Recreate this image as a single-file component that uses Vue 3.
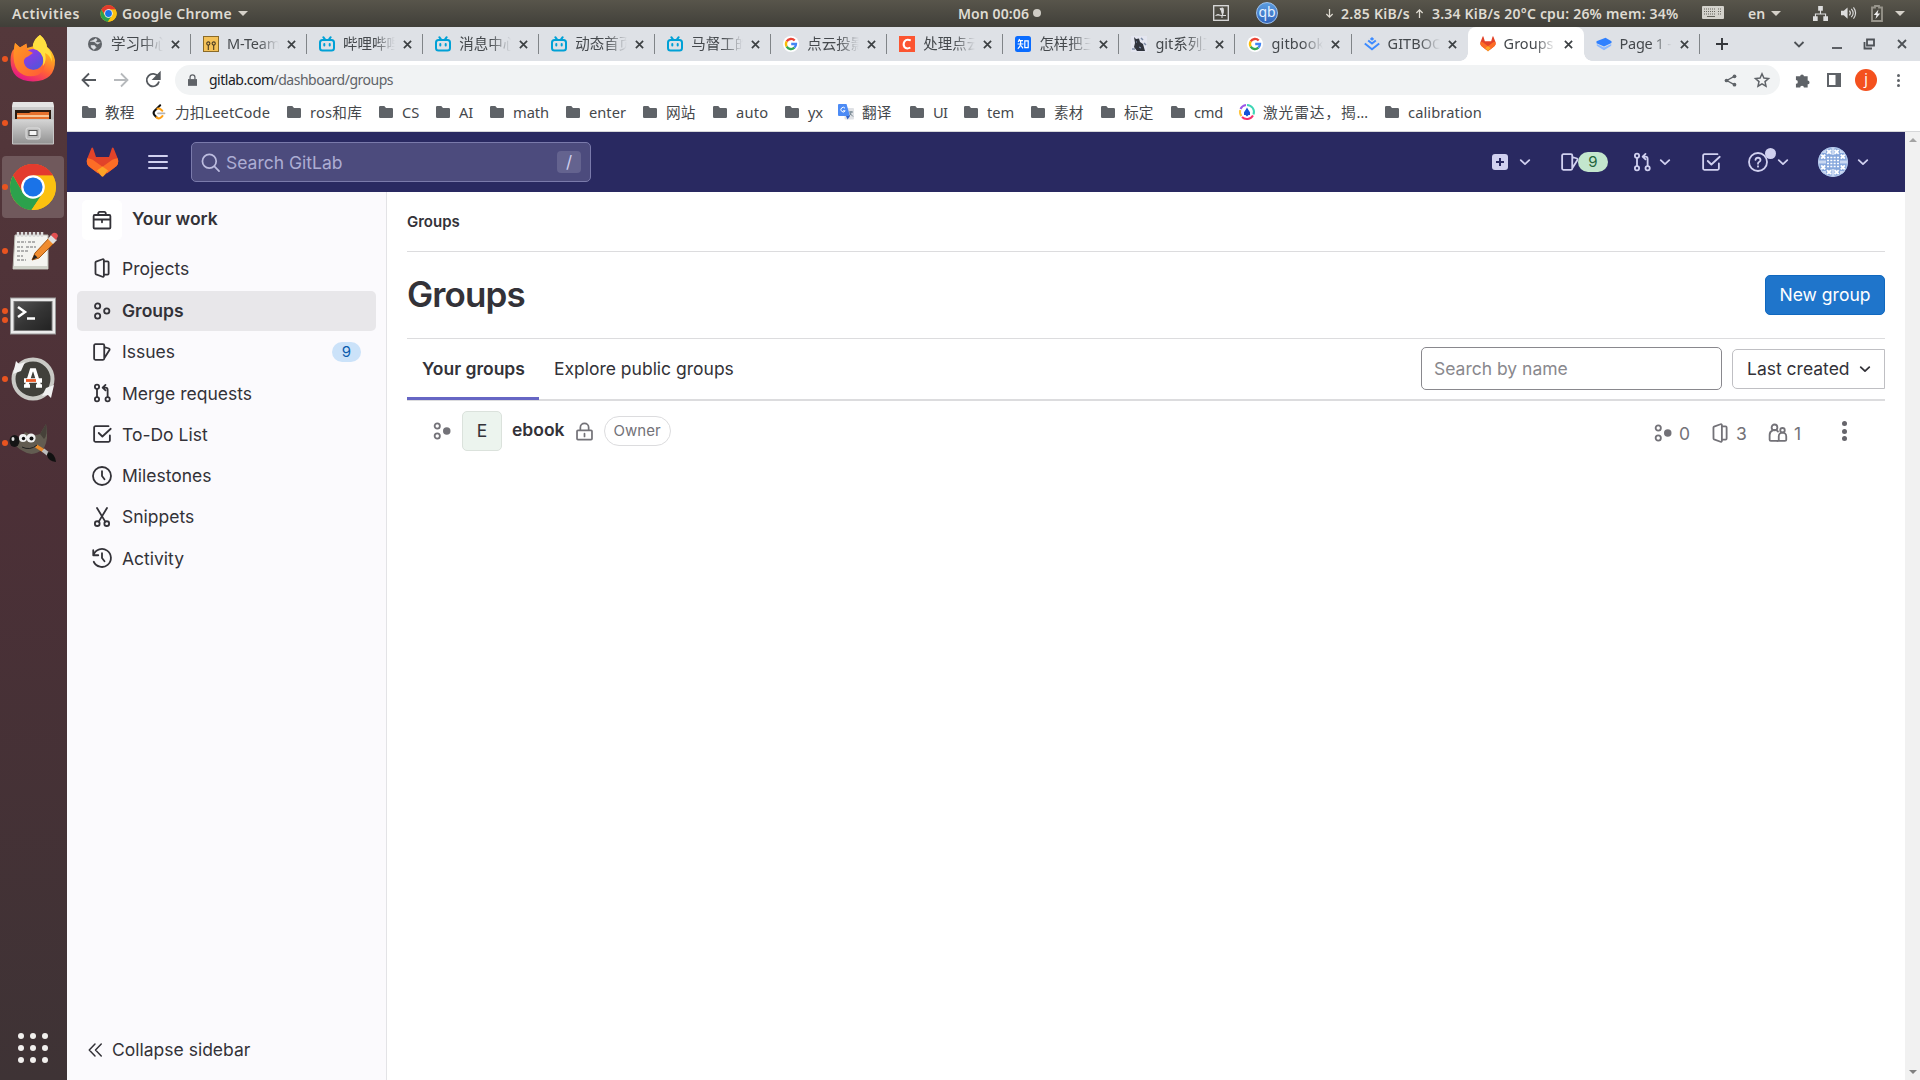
<script setup>
// Stretches a label to a set width by spreading the difference over its letters.
const vFit = {
  mounted(el, { value }) {
    if (!value) return
    const n = Array.from(el.textContent.trim()).length
    const w = el.getBoundingClientRect().width
    el.style.letterSpacing = ((value - w) / n).toFixed(3) + 'px'
  },
}

const chromeLogo =
  '<circle cx="24" cy="24" r="23" fill="#fbc110"/><path d="M24 24 4.1 12.5A23 23 0 0 1 43.9 12.5H24Z" fill="#e33b2e"/><path d="M4.1 12.5A23 23 0 0 0 22.5 47L34 29.8 24 24 14 29.8Z" fill="#2ca14c"/><path d="M4.1 12.5 14 29.8A11.5 11.5 0 0 1 24 12.5H43.9A23 23 0 0 0 4.1 12.5Z" fill="#e33b2e"/><path d="M34 29.8 22.5 47A23 23 0 0 0 43.9 12.5H24Z" fill="#fbc110"/><circle cx="24" cy="24" r="11.8" fill="#fff"/><circle cx="24" cy="24" r="9.6" fill="#1a73e8"/>'

const google =
  '<circle cx="8" cy="8" r="8" fill="#fff"/><g fill="none" stroke-width="2.3"><path d="M11.7 4.6A5 5 0 0 0 3.7 5.4" stroke="#ea4335"/><path d="M3.7 5.4A5 5 0 0 0 3.7 10.6" stroke="#fbbc05"/><path d="M3.7 10.6A5 5 0 0 0 11.4 11.7" stroke="#34a853"/><path d="M11.4 11.7A5 5 0 0 0 13 8H8.2" stroke="#4285f4"/></g>'
const bili =
  '<g fill="none" stroke="#00a1d6" stroke-width="2" stroke-linecap="round"><rect x="1" y="4" width="14" height="10.5" rx="2.5"/><path d="M4.3 1.2 6 3.4M11.7 1.2 10 3.4"/><path d="M5.3 8v1.6M10.7 8v1.6"/></g>'
const fox =
  '<path d="M5.3 1 1.3 11.5A8.8 8.8 0 0 0 4.5 21.5L16 30.5 27.5 21.5A8.8 8.8 0 0 0 30.7 11.5L26.7 1Q26 0 25.2 1L22.3 10.3H9.7L6.8 1Q6 0 5.3 1Z" fill="#e24329"/><path d="M1.3 11.5A8.8 8.8 0 0 0 4.5 21.5L11.5 27 16 20.5 6.5 13.2Q4 11.5 1.3 11.5ZM30.7 11.5A8.8 8.8 0 0 1 27.5 21.5L20.5 27 16 20.5 25.5 13.2Q28 11.5 30.7 11.5Z" fill="#fc6d26"/><path d="M10.6 24.2 16 20 21.4 24.2 17 30.2Q16 31 15 30.2Z" fill="#fca326"/>'

const tabIcons = {
  globe: '<circle cx="8" cy="8" r="7" fill="#5f6368"/><path d="M3 5.5 6 4.5 9 2.5 10 4 8 6.5 10.5 8 13.3 6.5M4 9.5h3.5L9 11.5 7 13.5 4.5 11.5Z" fill="#dee1e6" stroke="#dee1e6" stroke-width=".6"/>',
  mteam: '<rect x=".5" y=".5" width="15" height="15" fill="#f4c259" stroke="#8b6b28"/><g fill="none" stroke="#4a3b22" stroke-width="1.1"><circle cx="5.3" cy="7.5" r="1.6"/><circle cx="10.7" cy="7.5" r="1.6"/><path d="M5.3 9v5M10.7 9v5"/></g>',
  bili,
  google,
  csdn: '<rect width="16" height="16" fill="#fc5531"/><path d="M11.8 4.4Q7.5 2.6 5.6 5.3 3.7 8.4 5.4 11 7.4 13.4 11.4 11.7" fill="none" stroke="#fff" stroke-width="2"/>',
  zhihu: '<rect width="16" height="16" rx="2.5" fill="#0a6cff"/><g fill="none" stroke="#fff" stroke-width="1.2"><path d="M4.6 3 3.2 6M4 4.7h4M2.6 8h5.8M5.6 4.8V8Q5.3 11 2.8 12.7M6 9.5l2 2.8M9.8 4.8h3.4v6.8H9.8Z"/></g>',
  cat: '<rect width="16" height="16" fill="#e4e6f0"/><path d="M3 1 5 3 8 2.5 9 6 12 8 14 15H6L3 11 4 7Z" fill="#30343d"/><path d="M10 2 12 4M1 13h3M13 7l2 2" stroke="#8190aa" stroke-width="1.5"/><path d="M5 6h1M8 11l2 1" stroke="#8fa2c7"/>',
  juejin: '<path d="M8 1 10.2 2.9 8 4.7 5.8 2.9Z" fill="#3d8bff"/><path d="M4.2 4.5 8 7.5l3.8-3M.8 7.5 8 13.2 15.2 7.5" fill="none" stroke="#3d8bff" stroke-width="2"/>',
  fox: '<g transform="scale(.5)">' + fox + '</g>',
  layers: '<path d="M.8 9.800V8L8 11.500 15.200 8V9.800L8 14.200Z" fill="#8ab8ff"/><path d="M9.500 1.800 15.500 5.200V7L8 10.500.5 7.200V5.200Z" fill="#2f80ff"/>',
}

const tabs = [
  { t: '学习中心', i: 'globe' },
  { t: 'M-Team', i: 'mteam', w: 53 },
  { t: '哔哩哔哩', i: 'bili' },
  { t: '消息中心', i: 'bili' },
  { t: '动态首页', i: 'bili' },
  { t: '马督工的', i: 'bili' },
  { t: '点云投影', i: 'google' },
  { t: '处理点云', i: 'csdn' },
  { t: '怎样把三', i: 'zhihu' },
  { t: 'git系列工', i: 'cat' },
  { t: 'gitbook', i: 'google', w: 53 },
  { t: 'GITBOO', i: 'juejin', last: true, w: 56 },
  { t: 'Groups', i: 'fox', active: true, w: 50 },
  { t: 'Page 1 -', i: 'layers', w: 52 },
]

const folder = '<path d="M1 3.2A1.2 1.2 0 0 1 2.2 2H6.3L8 4h5.8A1.2 1.2 0 0 1 15 5.2v7.6A1.2 1.2 0 0 1 13.8 14H2.2A1.2 1.2 0 0 1 1 12.8Z" fill="#5f6368"/>'
const leet = '<path d="M5.500 13.200 3.400 11Q1.700 9 3.400 7L9.200 1.200" fill="none" stroke="#111" stroke-width="2" stroke-linecap="round"/><path d="M5.500 13.200Q8 15.500 10 13.400L11.5 12M6.500 4.800Q8.500 4 11.300 6.800" fill="none" stroke="#ffa116" stroke-width="2" stroke-linecap="round"/><path d="M7 9.300h6.500" stroke="#b3b3b3" stroke-width="1.8" stroke-linecap="round"/>'
const translate = '<rect x="6.5" y="4" width="9.5" height="11.5" rx="1" fill="#dfe1e5"/><path d="M1 0H8.5L12 12H1A1 1 0 0 1 0 11V1A1 1 0 0 1 1 0Z" fill="#4c8bf5"/><path d="M8 12h4l-2.5 3.5Z" fill="#2f62c9"/><path d="M7 4.2A2.3 2.3 0 1 0 7.2 6.8H5" fill="none" stroke="#fff"/><path d="M11 8h4M13 7v1Q13 11 11 12M12 9.5l3 3" stroke="#71828d" fill="none"/>'
const radar = '<g fill="none" stroke-width="2"><path d="M8 1A7 7 0 0 1 14.5 10.5" stroke="#3fd6b5"/><path d="M14 11.5A7 7 0 0 1 3 13" stroke="#f5306a"/><path d="M2.5 12.2A7 7 0 0 1 1.2 6" stroke="#ffc53d"/><path d="M1.5 5A7 7 0 0 1 7 1" stroke="#9c56e8"/></g><path d="M8 3.5Q9 5.5 11 8.2V11H9.5L8 12.5 6.5 11H5V8.2Q7 5.5 8 3.5Z" fill="#1554d8"/>'

const bookmarks = [
  { t: '教程', x: 70, w: 29.5 },
  { t: '力扣LeetCode', x: 135, w: 95, i: leet },
  { t: 'ros和库', x: 92, w: 52 },
  { t: 'CS', x: 57, w: 17.5 },
  { t: 'AI', x: 54, w: 14 },
  { t: 'math', x: 76, w: 36 },
  { t: 'enter', x: 77, w: 37 },
  { t: '网站', x: 70, w: 29.5 },
  { t: 'auto', x: 72, w: 32.5 },
  { t: 'yx', x: 54, w: 15 },
  { t: '翻译', x: 71, w: 29.5, i: translate },
  { t: 'UI', x: 54, w: 14.5 },
  { t: 'tem', x: 67, w: 27 },
  { t: '素材', x: 70, w: 29.5 },
  { t: '标定', x: 70, w: 29.5 },
  { t: 'cmd', x: 69, w: 29 },
  { t: '激光雷达，揭…', x: 145, w: 106, i: radar },
  { t: 'calibration', x: 110, w: 74 },
]

const ic = {
  work: '<path d="M5 4V2.6a1.1 1.1 0 0 1 1.1-1.1h3.8A1.1 1.1 0 0 1 11 2.6V4M2.2 4h11.6a.9.9 0 0 1 .9.9v9a.9.9 0 0 1-.9.9H2.2a.9.9 0 0 1-.9-.9v-9a.9.9 0 0 1 .9-.9ZM1.3 7.6h13.4M8 7.6v2.2"/>',
  project: '<path d="M2.75 3.6a.8.8 0 0 1 .5-.7L8.4 1a.8.8 0 0 1 1.1.7v12.6a.8.8 0 0 1-1.1.7l-5.1-1.9a.8.8 0 0 1-.5-.7ZM9.5 2.75h2.9a.9.9 0 0 1 .9.9v8.7a.9.9 0 0 1-.9.9H9.5"/>',
  group: '<circle cx="4.5" cy="4" r="2.1"/><circle cx="4.5" cy="12" r="2.1"/><circle cx="11.8" cy="8" r="2.1"/>',
  subgroup: '<circle cx="4.2" cy="4" r="2.1"/><circle cx="4.2" cy="12" r="2.1"/><circle cx="11.8" cy="8" r="3" fill="currentColor" stroke="none"/>',
  issues: '<path d="M2.7 1.75h6.1a1 1 0 0 1 1 1v10.5a1 1 0 0 1-1 1H2.7a1 1 0 0 1-1-1V2.75a1 1 0 0 1 1-1ZM9.8 4l3.8 1.2a.8.8 0 0 1 .5 1L9.8 13"/>',
  merge: '<circle cx="4" cy="3" r="1.7"/><circle cx="4" cy="13" r="1.7"/><circle cx="12.5" cy="13" r="1.7"/><path d="M4 4.7v6.6M12.5 11.3V5.5A1.8 1.8 0 0 0 10.7 3.7H8.6M10.8 1.5 8.5 3.7 10.8 5.9"/>',
  todo: '<path d="M13.2 1.75H2.7a1 1 0 0 0-1 1v10.5a1 1 0 0 0 1 1h10.6a1 1 0 0 0 1-1V9.2M5.4 7.2 8.3 10 15 3.8"/>',
  clock: '<circle cx="8" cy="8" r="7.2"/><path d="M8 4.2V8l2 2.6"/>',
  snippet: '<circle cx="4.2" cy="13.3" r="1.9"/><circle cx="11.8" cy="13.3" r="1.9"/><path d="M4 .8 10.6 11.7M12 .8 5.4 11.7"/>',
  history: '<path d="M1.2 5.4A7.2 7.2 0 1 1 1.4 11M1 1.8v4h4M8 4.2V8l2 2.6"/>',
  search: '<circle cx="7" cy="7" r="5.8"/><path d="m11.3 11.3 3.9 3.9"/>',
  chevron: '<path d="m4.2 6.3 3.8 3.6 3.8-3.6"/>',
  help: '<circle cx="8" cy="8" r="7.2"/><path d="M6 6.3Q6.2 4.6 8 4.6T10 6.3Q10 7.3 8.8 8 8 8.4 8 9.4M8 11.400v.3"/>',
  lock: '<path d="M2.5 7h11a.8.8 0 0 1 .8.8v6.3a.8.8 0 0 1-.8.8h-11a.8.8 0 0 1-.8-.8V7.8a.8.8 0 0 1 .8-.8ZM4.5 7V4.6a3.5 3.5 0 0 1 7 0V7M8 9.8v2.4"/>',
  users: '<circle cx="5.2" cy="3.5" r="2.3"/><path d="M7.6 14.3H2.3a1 1 0 0 1-1-1V9.5a3.9 3.9 0 0 1 6.7-2.7"/><path d="M8.6 14.3V10.7a3 3 0 0 1 6 0v2.6a1 1 0 0 1-1 1H7.6"/><circle cx="11.6" cy="5.8" r="1.8"/>',
  collapse: '<path d="m8 3.2-4.6 4.8 4.6 4.8M13 3.2 8.4 8l4.6 4.8"/>',
}

const menu = [
  { t: 'Projects', i: 'project' },
  { t: 'Groups', i: 'group', active: true },
  { t: 'Issues', i: 'issues', n: 9 },
  { t: 'Merge requests', i: 'merge' },
  { t: 'To-Do List', i: 'todo' },
  { t: 'Milestones', i: 'clock' },
  { t: 'Snippets', i: 'snippet' },
  { t: 'Activity', i: 'history' },
]

const dock = [
  {
    n: 1,
    svg: '<defs><linearGradient id="fa" x1=".8" y1="0" x2=".3" y2="1"><stop offset="0" stop-color="#fff44f"/><stop offset=".35" stop-color="#ffab1e"/><stop offset=".65" stop-color="#ff5f39"/><stop offset="1" stop-color="#e31587"/></linearGradient><linearGradient id="fb" x1=".2" y1="0" x2=".9" y2="1"><stop offset="0" stop-color="#9b35e8"/><stop offset="1" stop-color="#4a58d8"/></linearGradient><linearGradient id="fc" x1="0" y1="0" x2="1" y2="1"><stop offset="0" stop-color="#ff9a22"/><stop offset="1" stop-color="#ff5a38"/></linearGradient></defs><path d="M31 0Q37 5 38 12 44 16 46 25 46.500 46 24 46.500 1.500 46 1.500 25 1.500 17 5 14L6 8 11 12.500 17 9 18 13 25 11Q25 4 31 0Z" fill="url(#fa)"/><circle cx="24" cy="24.500" r="10.500" fill="url(#fb)"/><path d="M5 14 6 8 11 12.500 17.500 8.500 18.500 15 24 18 19 21.500Q14 23 15 28 17 35 25 35 33 35 35.500 28 37 35 29 40 17 44 9 36 3 28 5 14Z" fill="url(#fc)"/><path d="M31 0Q37 5 38 12 43 17 43 27 41 20 36 18 38 26 34 31 36 20 28 15 23 14 24 9 26 3 31 0Z" fill="#ffe040"/>',
  },
  {
    n: 1,
    svg: '<defs><linearGradient id="ga" y2="1" x2="0"><stop stop-color="#d5d5d5"/><stop offset="1" stop-color="#929292"/></linearGradient></defs><path d="M4 3H44L45 8V45H3V8Z" fill="url(#ga)"/><path d="M4 3H44L45 8H3Z" fill="#e4e4e4"/><rect x="6" y="11" width="36" height="9" fill="#2a1a10"/><path d="M8 14H20L22 13H40V21H8Z" fill="#e6702c"/><path d="M8 17H40" stroke="#ffe2b8" stroke-width="1.500"/><path d="M3.500 20.500H44.500V45H3.500Z" fill="url(#ga)" stroke="#c7c7c7"/><rect x="17" y="29" width="14" height="11" rx="2" fill="#bdbdbd" stroke="#dedede"/><rect x="20" y="31.500" width="8" height="5" fill="#f4f4f4" stroke="#555"/>',
  },
  { n: 1, svg: chromeLogo, active: true },
  {
    n: 1,
    svg: '<path d="M6 8H39V42H4Z" fill="#f4f4f0" stroke="#b8b8b0"/><path d="M4.500 39H39V42H4Z" fill="#cfd1c8"/><g fill="none" stroke="#999" stroke-width="1.500"><path d="M9 5v5M13 5v5M17 5v5M21 5v5M25 5v5M29 5v5M33 5v5" stroke="#ddd" stroke-width="2.500"/><path d="M8 15h9M19 15h8M8 20h6M17 20h10M8 24h12M8 29h6M8 33h9" stroke-dasharray="3 1"/></g><path d="M23 33 26 26 41 10 46 15 30 31Z" fill="#f08c2e" stroke="#a55713"/><path d="m39 12 3-4 6 5-4 4Z" fill="#dfdfdf"/><path d="m42 8 2-2q4-1 5 3l-2 4Z" fill="#e25050"/><path d="m23 33 2.500-5.500 3 3Z" fill="#222"/>',
  },
  {
    n: 2,
    svg: '<defs><linearGradient id="ta" x2="1" y2="1"><stop stop-color="#555"/><stop offset=".5" stop-color="#353535"/><stop offset="1" stop-color="#222"/></linearGradient></defs><g transform="translate(0 1)"><rect x="1.500" y="6" width="45" height="36" fill="#ececec" stroke="#999"/><rect x="5" y="9.500" width="38" height="29" fill="url(#ta)" stroke="#777"/><path d="m9 15 7 5-7 5M18 26.500h8" fill="none" stroke="#fff" stroke-width="2.500"/></g>',
  },
  {
    n: 1,
    svg: '<circle cx="24" cy="24" r="19.500" fill="#41403b" stroke="#c9c9c5" stroke-width="4"/><path d="M4 19 7 6l3 3 6-2-4 9Z" fill="#f1f1f1"/><path d="m45 30-3 13-3-3-6 1 4-8Z" fill="#f1f1f1"/><path d="M17.500 31 22.500 15h3l5 16M15 31h6M27 31h6" fill="none" stroke="#fff" stroke-width="3.500"/><path d="M15 25.500h18" stroke="#fff" stroke-width="4.500"/><path d="M17 25.500h10" stroke="#ec5a28" stroke-width="2.800"/>',
  },
  {
    n: 1,
    svg: '<path d="M2 20Q10 24 16 13 24 18 31 15L37 5Q40 20 35 29 24 39 14 32 6 28 2 20Z" fill="#625c51"/><path d="M31 15 37 5Q39 16 35 20Z" fill="#464139"/><ellipse cx="5.500" cy="22" rx="5" ry="6" fill="#151515"/><ellipse cx="4" cy="20" rx="1.500" ry="2" fill="#ddd"/><circle cx="14" cy="19" r="4" fill="#f1f1f1"/><circle cx="22" cy="19" r="4.600" fill="#f1f1f1"/><circle cx="14.500" cy="19.500" r="1.700" fill="#111"/><circle cx="22.500" cy="19.500" r="2" fill="#111"/><path d="m27 27 8 5" stroke="#e98a2b" stroke-width="3.500"/><path d="m34 31 5 4" stroke="#bdbdbd" stroke-width="4"/><path d="M39 33q7 1 8 10-8-1-9-7Z" fill="#111"/><path d="M13 28q8 4 15-2" stroke="#222" fill="none"/>',
  },
]

const crosses = [[11, 4.8], [18.7, 4.8], [5.2, 9.6], [24.8, 9.6], [5.2, 20.4], [24.8, 20.4], [11, 25.2], [18.7, 25.2]]
</script>

<template>
  <div class="desktop">
    <header class="topbar">
      <span class="act" v-fit="68">Activities</span>
      <svg class="tb-chrome" viewBox="0 0 48 48" v-html="chromeLogo"></svg>
      <span class="appname" v-fit="110">Google Chrome</span>
      <i class="tri t1"></i>
      <span class="clock" v-fit="71">Mon 00:06</span>
      <i class="note"></i>
      <svg class="tb-pic" viewBox="0 0 16 16"><rect x=".7" y=".7" width="14.600" height="14.600" fill="none" stroke="#ddd" stroke-width="1.300" /><path d="M2.500 10.500 5 9.500 8 10.500H13M9 10.500V13M7 3.500 10 3 10.500 6.500 9.500 10 8.500 6Z" fill="#ddd" stroke="#ddd" /></svg>
      <span class="qb">qb</span>
      <svg class="arr a1" viewBox="0 0 9 10"><path d="M4.500 0v9M1 5.500l3.500 3.500L8 5.500" /></svg>
      <span class="net1" v-fit="69">2.85 KiB/s</span>
      <svg class="arr a2" viewBox="0 0 9 10"><path d="M4.500 10V1M1 4.500 4.500 1 8 4.500" /></svg>
      <span class="net2" v-fit="246.500">3.34 KiB/s 20°C cpu: 26% mem: 34%</span>
      <svg class="kbd" viewBox="0 0 22 13"><rect width="22" height="13" rx="1" fill="#d4d2cc" /><path d="M2 3h12M2 5.500h12M2 8h12M16 3h4M16 5.500h4M16 8h4" stroke="#66645c" stroke-dasharray="1 1" stroke-width="1.200" /><path d="M5 10.500h8" stroke="#66645c" /></svg>
      <span class="lang" v-fit="17">en</span>
      <i class="tri t2"></i>
      <svg class="lan" viewBox="0 0 16 16"><path d="M5.500 0h5v5h-5ZM0 11h5v5H0ZM11 11h5v5h-5ZM7.400 5h1.200v3H14v3h-1.200V9H3.200v2H2V8h5.400Z" fill="#ddd" /></svg>
      <svg class="vol" viewBox="0 0 16 16"><path d="M0 5.500h3L7 2v12L3 10.500H0Z" fill="#ddd" /><path d="M9 5.500q2 2.500 0 5M11 3.500q4 4.500 0 9M13.300 2q4.500 6 0 12" fill="none" stroke="#ddd" stroke-width="1.200" /></svg>
      <svg class="bat" viewBox="0 0 12 17"><path d="M4 1h4v1.500h3v13.500H1V2.500h3Z" fill="none" stroke="#98958c" stroke-width="1.800" /><path d="M7.500 4.500 2.800 10h2.700L4.500 14l4.700-5.500H6.500Z" fill="#eee" /></svg>
      <i class="tri t3"></i>
    </header>

    <div class="body">
      <aside class="dock">
        <div v-for="(d, k) in dock" :key="k" class="ditem" :class="{ on: d.active }">
          <span class="dots"><i v-for="m in d.n" :key="m"></i></span>
          <svg viewBox="0 0 48 48" v-html="d.svg"></svg>
        </div>
        <div class="apps"><i v-for="m in 9" :key="m"></i></div>
      </aside>

      <section class="chrome">
        <div class="tabstrip">
          <div v-for="(t, k) in tabs" :key="k" class="tab" :class="{ active: t.active, nosep: t.last || t.active }">
            <svg viewBox="0 0 16 16" class="fav" v-html="tabIcons[t.i]"></svg>
            <span class="ttl"><span v-fit="t.w">{{ t.t }}</span></span>
            <svg class="x" viewBox="0 0 10 10"><path d="m1 1 8 8M9 1 1 9" /></svg>
          </div>
          <svg class="plus" viewBox="0 0 12 12"><path d="M6 0v12M0 6h12" /></svg>
          <span class="grow"></span>
          <svg class="wc w1" viewBox="0 0 12 12"><path d="m1.500 4 4.500 4.500L10.500 4" /></svg>
          <svg class="wc w2" viewBox="0 0 12 12"><path d="M1 10h10" /></svg>
          <svg class="wc w3" viewBox="0 0 12 12"><path d="M4 1.500h7v6H4ZM1.500 4v6.500H9" /></svg>
          <svg class="wc w4" viewBox="0 0 12 12"><path d="m2 2 8 8M10 2l-8 8" /></svg>
        </div>

        <div class="toolbar">
          <svg class="nv n1" viewBox="0 0 16 16"><path d="M15 8H2M8 1.500 1.500 8 8 14.500" /></svg>
          <svg class="nv n2" viewBox="0 0 16 16"><path d="M1 8h13M8 1.500 14.500 8 8 14.500" /></svg>
          <svg class="nv n3" viewBox="0 0 16 16"><path d="M13.300 5A6.200 6.200 0 1 0 14 9.500" /><path d="M14.800 1v6h-6Z" fill="#54585d" stroke="none" /></svg>
          <div class="omni">
            <svg class="ssl" viewBox="0 0 10 13"><path d="M0 5.500h10V13H0Z" fill="#5f6368" /><path d="M2.300 6V3.500a2.700 2.700 0 0 1 5.400 0V6" fill="none" stroke="#5f6368" stroke-width="1.400" /></svg>
            <span class="url" v-fit="184"><b>gitlab.com</b>/dashboard/groups</span>
            <span class="grow"></span>
            <svg class="share" viewBox="0 0 14 14"><path d="M11 2.500 3 7l8 4.500" fill="none" stroke="#5f6368" stroke-width="1.400" /><g fill="#5f6368"><circle cx="11.300" cy="2.500" r="2" /><circle cx="2.700" cy="7" r="2" /><circle cx="11.300" cy="11.500" r="2" /></g></svg>
            <svg class="star" viewBox="0 0 16 16"><path d="m8 1.800 1.900 4.300 4.600.4-3.500 3.100 1 4.600L8 11.800l-4 2.400 1-4.600-3.500-3.100 4.600-.4Z" fill="none" stroke="#5f6368" stroke-width="1.500" /></svg>
          </div>
          <svg class="puz" viewBox="0 0 16 16"><path d="M1 3.500h4.500a2 2 0 1 1 4 0H13.500v4.500a2 2 0 1 1 0 4v3.500H9.500a2 2 0 1 0-4 0H1V11.500a2 2 0 1 0 0-4Z" fill="#5f6368" /></svg>
          <svg class="pan" viewBox="0 0 14 14"><path d="M1 1h12v12H1Z" fill="none" stroke="#5f6368" stroke-width="2" /><path d="M8.500 1H13v12H8.500Z" fill="#5f6368" /></svg>
          <span class="me">j</span>
          <span class="kb"><i></i><i></i><i></i></span>
        </div>

        <div class="bookmarks">
          <div v-for="b in bookmarks" :key="b.t" class="bm" :style="{ width: b.x + 'px' }">
            <svg viewBox="0 0 16 16" v-html="b.i || folder"></svg>
            <span v-fit="b.w">{{ b.t }}</span>
          </div>
        </div>

        <div class="view">
          <div class="page">
            <nav class="navbar">
              <svg class="logo" viewBox="0 0 32 32" preserveAspectRatio="none" v-html="fox"></svg>
              <span class="burger"><i></i><i></i><i></i></span>
              <div class="gsearch">
                <svg class="ic s18" viewBox="0 0 16 16" v-html="ic.search"></svg>
                <span>Search GitLab</span>
                <kbd>/</kbd>
              </div>
              <span class="grow"></span>
              <span class="plusbox"></span>
              <svg class="ic chev c1" viewBox="0 0 16 16" v-html="ic.chevron"></svg>
              <svg class="ic g1" viewBox="0 0 16 16" v-html="ic.issues"></svg>
              <span class="cnt">9</span>
              <svg class="ic g2" viewBox="0 0 16 16" v-html="ic.merge"></svg>
              <svg class="ic chev c2" viewBox="0 0 16 16" v-html="ic.chevron"></svg>
              <svg class="ic g3" viewBox="0 0 16 16" v-html="ic.todo"></svg>
              <span class="helpw"><svg class="ic" viewBox="0 0 16 16" v-html="ic.help"></svg><i></i></span>
              <svg class="ic chev c3" viewBox="0 0 16 16" v-html="ic.chevron"></svg>
              <svg class="ava" viewBox="0 0 30 30">
                <defs>
                  <clipPath id="av"><circle cx="15" cy="15" r="15" /></clipPath>
                </defs>
                <g clip-path="url(#av)">
                  <rect width="30" height="30" fill="#86a7dc" />
                  <path d="M13.500 0h3v30h-3ZM0 13.500h30v3H0Z" fill="#c9d8f1" />
                  <rect x="8" y="8" width="14" height="14" fill="#86a7dc" />
                  <path d="M9 10.500h12M9 13.500h12M9 16.500h12M9 19.500h12" stroke="#fff" stroke-width="1.700" stroke-dasharray="2 1.330" />
                  <path d="M3 3h5v3H3ZM22 3h5v3h-5ZM3 24h5v3H3ZM22 24h5v3h-5Z" fill="#c9d8f1" />
                  <path v-for="(c, k) in crosses" :key="k" :d="`M${c[0] - 2} ${c[1] - 2}l4 4m0-4l-4 4`" stroke="#fff" stroke-width="1.900" />
                </g>
                <circle cx="15" cy="15" r="14.500" fill="none" stroke="#b9caea" />
              </svg>
              <svg class="ic chev c4" viewBox="0 0 16 16" v-html="ic.chevron"></svg>
            </nav>

            <div class="cols">
              <aside class="side">
                <div class="ctx">
                  <span class="cbox"><svg class="ic" viewBox="0 0 16 16" v-html="ic.work"></svg></span>
                  <b>Your work</b>
                </div>
                <ul>
                  <li v-for="m in menu" :key="m.t" :class="{ on: m.active }">
                    <svg class="ic" viewBox="0 0 16 16" v-html="ic[m.i]"></svg>
                    <span>{{ m.t }}</span>
                    <em v-if="m.n">{{ m.n }}</em>
                  </li>
                </ul>
                <div class="collapse">
                  <svg class="ic" viewBox="0 0 16 16" v-html="ic.collapse"></svg>
                  <span>Collapse sidebar</span>
                </div>
              </aside>

              <main>
                <div class="crumb">Groups</div>
                <div class="head">
                  <h1>Groups</h1>
                  <button>New group</button>
                </div>
                <div class="gtabs">
                  <span class="gt sel">Your groups</span>
                  <span class="gt">Explore public groups</span>
                  <span class="grow"></span>
                  <span class="field">Search by name</span>
                  <span class="sort">Last created<svg class="ic chev" viewBox="0 0 16 16" v-html="ic.chevron"></svg></span>
                </div>
                <div class="row">
                  <svg class="ic r1" viewBox="0 0 16 16" v-html="ic.subgroup"></svg>
                  <span class="gav">E</span>
                  <b class="gname">ebook</b>
                  <svg class="ic lk" viewBox="0 0 16 16" v-html="ic.lock"></svg>
                  <span class="owner">Owner</span>
                  <span class="grow"></span>
                  <span class="st s1"><svg class="ic" viewBox="0 0 16 16" v-html="ic.subgroup"></svg><span>0</span></span>
                  <span class="st s2"><svg class="ic" viewBox="0 0 16 16" v-html="ic.project"></svg><span>3</span></span>
                  <span class="st s3"><svg class="ic" viewBox="0 0 16 16" v-html="ic.users"></svg><span>1</span></span>
                  <span class="rk"><i></i><i></i><i></i></span>
                </div>
              </main>
            </div>
          </div>
          <div class="scroll"><i class="up"></i><i class="down"></i></div>
        </div>
      </section>
    </div>
  </div>
</template>

<style>
body {
  margin: 0;
  overflow: hidden;
}
</style>

<style scoped>
* {
  box-sizing: border-box;
}
svg {
  display: block;
  flex: none;
  overflow: visible;
}
i,
em {
  font-style: normal;
}
.grow {
  flex: 1;
}
.desktop {
  width: 1920px;
  height: 1080px;
  display: flex;
  flex-direction: column;
  font-family: "Noto Sans", "Noto Sans CJK SC", sans-serif;
  overflow: hidden;
}
.topbar {
  height: 27px;
  flex: none;
  display: flex;
  align-items: center;
  background: linear-gradient(#58554b, #403f39);
  color: #dfdbd2;
  font-size: 14px;
  font-weight: 600;
  white-space: nowrap;
  line-height: 26px;
}
.topbar > * {
  flex: none;
}
.act {
  margin-left: 12px;
}
.tb-chrome {
  width: 17px;
  height: 17px;
  position: absolute;
  left: 100px;
  top: 5px;
}
.appname {
  position: absolute;
  left: 122px;
}
.tri {
  position: absolute;
  top: 11px;
  border: 5px solid transparent;
  border-top-color: #d5d1c9;
  border-bottom: 0;
}
.t1 { left: 238px; }
.t2 { left: 1771px; }
.t3 { left: 1895px; }
.clock { position: absolute; left: 958px; }
.note {
  position: absolute;
  left: 1033px;
  top: 9px;
  width: 8px;
  height: 8px;
  border-radius: 50%;
  background: #cfccc5;
}
.tb-pic { position: absolute; left: 1213px; top: 5px; width: 16px; height: 16px; }
.qb {
  position: absolute;
  left: 1256px;
  top: 2px;
  width: 22px;
  height: 22px;
  border-radius: 50%;
  background: linear-gradient(#5b9de0, #3265bd);
  border: 1px solid #9fc3ee;
  color: #e6f1ff;
  font-size: 14px;
  font-weight: 400;
  line-height: 17px;
  text-align: center;
}
.arr { position: absolute; top: 9px; width: 9px; height: 9px; }
.arr path { fill: none; stroke: #dfdbd2; stroke-width: 1.4; }
.a1 { left: 1325px; }
.a2 { left: 1415px; }
.net1 { position: absolute; left: 1341px; }
.net2 { position: absolute; left: 1432px; }
.kbd { position: absolute; left: 1702px; top: 6px; width: 22px; height: 13px; }
.lang { position: absolute; left: 1748px; }
.lan { position: absolute; left: 1813px; top: 6px; width: 15px; height: 15px; }
.vol { position: absolute; left: 1841px; top: 5px; width: 15px; height: 16px; }
.bat { position: absolute; left: 1871px; top: 5px; width: 12px; height: 17px; }

.body {
  flex: 1;
  display: flex;
  min-height: 0;
}
.dock {
  width: 67px;
  flex: none;
  background: linear-gradient(#54383b, #4c3037 45%, #3e3335);
  display: flex;
  flex-direction: column;
  align-items: center;
}
.ditem {
  width: 62px;
  height: 62px;
  margin-bottom: 2px;
  border-radius: 4px;
  display: flex;
  align-items: center;
  margin-left: -1px;
  flex: none;
}
.ditem:first-child {
  margin-top: 1px;
}
.ditem.on {
  background: #70595c;
}
.ditem svg {
  width: 48px;
  height: 48px;
  margin-left: 1px;
}
.dots {
  width: 6px;
  display: flex;
  flex-direction: column;
  gap: 3px;
}
.dots i {
  width: 6px;
  height: 6px;
  border-radius: 50%;
  background: #e95420;
}
.apps {
  margin-top: auto;
  margin-bottom: 17px;
  margin-left: -2px;
  display: grid;
  grid-template-columns: repeat(3, 6px);
  gap: 6px;
}
.apps i {
  width: 6px;
  height: 6px;
  border-radius: 50%;
  background: #f2f0ee;
}

.chrome {
  flex: 1;
  min-width: 0;
  display: flex;
  flex-direction: column;
  background: #fff;
}
.tabstrip {
  height: 34px;
  flex: none;
  background: #dee1e6;
  display: flex;
  align-items: center;
  padding-left: 8px;
  color: #45494d;
  font-size: 14.5px;
}
.tab {
  width: 116.05px;
  height: 34px;
  flex: none;
  display: flex;
  align-items: center;
  position: relative;
  padding-left: 12px;
}
.tab::after {
  content: "";
  position: absolute;
  right: 0;
  top: 7px;
  height: 20px;
  width: 1px;
  background: #808488;
}
.tab.nosep::after {
  display: none;
}
.tab.active {
  background: #fff;
  border-radius: 8px 8px 0 0;
}
.tab.active::before,
.tab.active::after {
  content: "";
  display: block;
  position: absolute;
  top: auto;
  bottom: 0;
  width: 8px;
  height: 8px;
}
.tab.active::before {
  left: -8px;
  background: radial-gradient(circle at 0 0, transparent 7.5px, #fff 8px);
}
.tab.active::after {
  right: -8px;
  background: radial-gradient(circle at 100% 0, transparent 7.5px, #fff 8px);
}
.fav {
  width: 16px;
  height: 16px;
}
.ttl {
  margin: -2px 0 0 8px;
  width: 52px;
  white-space: nowrap;
  line-height: 24px;
  mask-image: linear-gradient(90deg, #000 60%, transparent);
}
.x {
  width: 9px;
  height: 9px;
  margin-left: 8px;
}
.x path {
  stroke: #3c4043;
  stroke-width: 1.9;
}
.plus {
  width: 12px;
  height: 12px;
  margin-left: 16px;
}
.plus path {
  stroke: #33363a;
  stroke-width: 1.9;
}
.wc {
  width: 12px;
  height: 12px;
}
.wc path {
  fill: none;
  stroke: #4d5156;
  stroke-width: 1.8;
}
.w1 { margin-right: 26px; }
.w2 { margin-right: 20px; }
.w3 { margin-right: 21px; }
.w4 { margin-right: 12px; }

.toolbar {
  height: 38px;
  flex: none;
  display: flex;
  align-items: center;
  padding-left: 14px;
}
.nv {
  width: 16px;
  height: 16px;
}
.nv path {
  fill: none;
  stroke: #54585d;
  stroke-width: 1.8;
}
.nv.n2 { margin-left: 16px; }
.nv.n2 path { stroke: #b6b9bc; }
.nv.n3 { margin-left: 16px; }
.nv.n3 path:last-child { fill: #54585d; }
.omni {
  margin-left: 14px;
  width: 1605px;
  height: 30px;
  border-radius: 15px;
  background: #f1f3f4;
  display: flex;
  align-items: center;
  padding: 0 10px 0 13px;
  font-size: 14px;
  color: #5f6368;
}
.ssl { width: 9px; height: 12px; }
.url { margin: -2px 0 0 12px; white-space: nowrap; }
.url b { font-weight: 400; color: #202124; }
.share { width: 13px; height: 13px; margin-right: 17px; }
.star { width: 16px; height: 16px; }
.puz { width: 15px; height: 15px; margin-left: 15px; }
.pan { width: 14px; height: 14px; margin-left: 17px; }
.me {
  width: 22px;
  height: 22px;
  margin-left: 14px;
  border-radius: 50%;
  background: #f4511e;
  color: #fff;
  font-size: 14px;
  text-align: center;
  line-height: 19px;
}
.kb {
  margin-left: 20px;
  display: flex;
  flex-direction: column;
  gap: 2px;
}
.kb i {
  width: 3px;
  height: 3px;
  border-radius: 50%;
  background: #5f6368;
}
.bookmarks {
  height: 33px;
  flex: none;
  border-bottom: 1px solid #d6d7d9;
  display: flex;
  align-items: center;
  padding: 0 0 6px 14px;
  font-size: 14.67px;
  color: #45484c;
}
.bm {
  flex: none;
  display: flex;
  align-items: center;
  white-space: nowrap;
  line-height: 24px;
}
.bm span {
  margin-top: -1px;
}
.bm svg {
  width: 16px;
  height: 16px;
  margin-right: 8px;
}

.view {
  flex: 1;
  display: flex;
  min-height: 0;
}
.page {
  width: 1838px;
  display: flex;
  flex-direction: column;
  font-family: Inter, "Noto Sans", sans-serif;
  font-size: 17.5px;
  color: #333238;
}
.scroll {
  flex: 1;
  background: #f1f1f1;
  display: flex;
  flex-direction: column;
  align-items: center;
  justify-content: space-between;
  padding: 6px 0;
}
.scroll i {
  border: 4px solid transparent;
}
.up {
  border-top: 0 !important;
  border-bottom-color: #a3a3a3 !important;
}
.down {
  border-bottom: 0 !important;
  border-top-color: #808080 !important;
}
.ic {
  width: 20px;
  height: 20px;
  fill: none;
  stroke: currentColor;
  stroke-width: 1.45;
  stroke-linecap: round;
  stroke-linejoin: round;
}
.navbar {
  height: 60px;
  flex: none;
  background: #292961;
  color: #d1d1f0;
  display: flex;
  align-items: center;
  padding-left: 19px;
}
.logo { width: 33px; height: 31px; }
.burger {
  margin-left: 29px;
  width: 20px;
  display: flex;
  flex-direction: column;
  gap: 4px;
}
.burger i {
  height: 2px;
  border-radius: 1px;
  background: #d1d1f0;
}
.gsearch {
  margin-left: 23px;
  width: 400px;
  height: 40px;
  border: 1px solid #7a7aab;
  border-radius: 5px;
  background: #4c4b7d;
  display: flex;
  align-items: center;
  padding: 0 9px 0 9px;
  color: #adadd3;
}
.gsearch .ic { color: #bdbde0; }
.s18 { width: 19px; height: 19px; }
.gsearch span { margin-left: 6px; flex: 1; }
.gsearch kbd {
  width: 24px;
  height: 22px;
  border-radius: 4px;
  background: #64638f;
  color: #d1d1f0;
  font: 17px/22px Inter, sans-serif;
  text-align: center;
}
.plusbox {
  width: 16px;
  height: 16px;
  border-radius: 3px;
  background:
    linear-gradient(#292961, #292961) center / 8px 2px no-repeat,
    linear-gradient(#292961, #292961) center / 2px 8px no-repeat,
    #d1d1f0;
}
.chev { width: 18px; height: 18px; stroke-width: 1.6; }
.c1 { margin-left: 8px; }
.g1 { margin-left: 26px; }
.cnt {
  width: 30px;
  height: 20px;
  margin-left: -2px;
  position: relative;
  border-radius: 10px;
  background: #c3e6cd;
  color: #24663b;
  font-size: 15px;
  line-height: 20px;
  text-align: center;
}
.g2 { margin-left: 24px; }
.c2 { margin-left: 4px; }
.g3 { margin-left: 27px; }
.helpw { margin-left: 27px; position: relative; }
.helpw i {
  position: absolute;
  left: 17px;
  top: -4px;
  width: 11px;
  height: 11px;
  border-radius: 50%;
  background: #d1d1f0;
}
.c3 { margin-left: 6px; }
.ava { width: 30px; height: 30px; margin-left: 26px; }
.c4 { margin: 0 33px 0 6px; }

.cols {
  flex: 1;
  display: flex;
  min-height: 0;
}
.side {
  width: 320px;
  flex: none;
  background: #fbfafd;
  border-right: 1px solid #e3e3e6;
  display: flex;
  flex-direction: column;
}
.ctx {
  display: flex;
  align-items: center;
  padding: 8px 0 0 15px;
}
.ctx b {
  margin-left: 10px;
  margin-top: -3px;
  font-weight: 600;
}
.cbox {
  width: 40px;
  height: 40px;
  border-radius: 5px;
  background: #fff;
  display: flex;
  align-items: center;
  justify-content: center;
}
.side ul {
  list-style: none;
  margin: 8.25px 0 0;
  padding: 0 10px;
}
.side li {
  height: 40px;
  margin-bottom: 1.25px;
  border-radius: 5px;
  display: flex;
  align-items: center;
  padding: 0 15px;
}
.side li:first-child {
  margin-bottom: 2.4px;
}
.side li span {
  margin-left: 10px;
  flex: 1;
}
.side li.on {
  background: #e8e7ea;
  font-weight: 600;
}
.side em {
  width: 29px;
  height: 20px;
  border-radius: 10px;
  background: #cbe2f9;
  color: #0b5cad;
  font-size: 15px;
  line-height: 20px;
  text-align: center;
}
.collapse {
  margin-top: auto;
  height: 61px;
  display: flex;
  align-items: center;
  padding-left: 18px;
}
.collapse span { margin: -1px 0 0 7px; }
.collapse .ic { stroke-width: 1.2; }

main {
  margin-left: 20px;
  width: 1478px;
}
.crumb {
  height: 60px;
  border-bottom: 1px solid #dcdcde;
  font-size: 15px;
  font-weight: 600;
  line-height: 60px;
}
.head {
  height: 87px;
  display: flex;
  align-items: center;
  justify-content: space-between;
  border-bottom: 1px solid #dcdcde;
}
h1 {
  margin: -2px 0 0;
  font-size: 35px;
  font-weight: 600;
  letter-spacing: -0.9px;
  line-height: 44px;
}
button {
  width: 120px;
  height: 40px;
  padding: 0 0 2px;
  border: 1px solid #1068bf;
  border-radius: 5px;
  background: #1f75cb;
  color: #fff;
  font: 17.5px Inter, sans-serif;
}
.gtabs {
  height: 62px;
  border-bottom: 2px solid #dcdcde;
  display: flex;
  align-items: center;
}
.gt {
  height: 61px;
  padding: 0 15px;
  line-height: 60px;
  margin-bottom: -1px;
}
.gt.sel {
  padding-right: 14px;
  font-weight: 600;
  border-bottom: 3px solid #6666c4;
}
.field {
  width: 301px;
  height: 43px;
  margin-bottom: 1px;
  border: 1px solid #89888d;
  border-radius: 5px;
  padding-left: 12px;
  line-height: 41px;
  color: #89888d;
}
.sort {
  margin: 0 0 1px 10px;
  width: 153px;
  height: 40px;
  border: 1px solid #bfbfc3;
  border-radius: 5px 0 0 5px;
  display: flex;
  align-items: center;
  justify-content: space-between;
  padding: 0 10px 0 14px;
}
.row {
  height: 60px;
  display: flex;
  align-items: center;
  padding-left: 25px;
  color: #737278;
}
.gav {
  margin-left: 10px;
  width: 40px;
  height: 40px;
  border: 1px solid #dbe2dc;
  border-radius: 5px;
  background: #ecf4ee;
  color: #333238;
  text-align: center;
  line-height: 38px;
  font-size: 17.5px;
}
.gname {
  margin: -4px 0 0 10px;
  font-weight: 600;
  color: #333238;
}
.lk { margin-left: 10px; width: 19px; height: 19px; }
.owner {
  margin-left: 10px;
  width: 67px;
  height: 30px;
  border: 1px solid #dcdcde;
  border-radius: 15px;
  text-align: center;
  font-size: 15px;
  line-height: 28px;
}
.st {
  display: flex;
  align-items: center;
  gap: 6px;
  margin-top: 3px;
}
.st span { margin-top: 2px; }
.s1 { width: 57px; }
.s2 { width: 58px; }
.s3 { width: 74px; }
.rk {
  display: flex;
  flex-direction: column;
  gap: 2.5px;
  margin-right: 38px;
}
.rk i {
  width: 5px;
  height: 5px;
  border-radius: 50%;
  background: #66656b;
}
</style>
